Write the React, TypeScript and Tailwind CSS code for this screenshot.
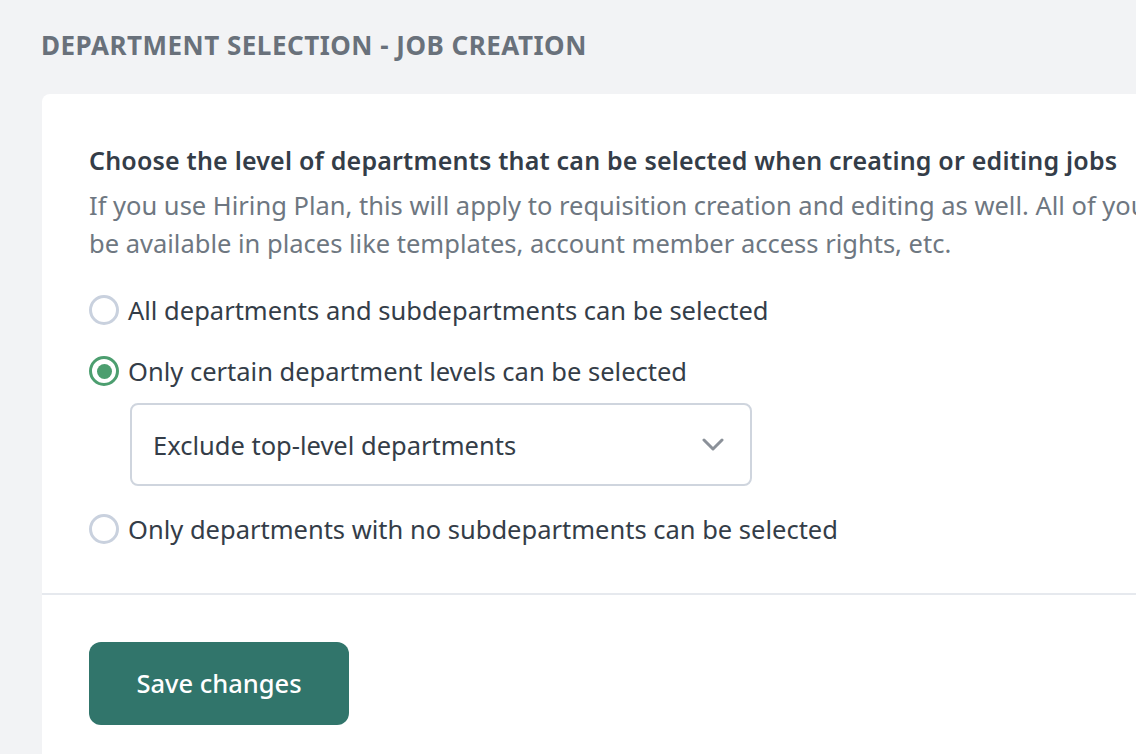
import React from "react";

function Radio({ checked }: { checked?: boolean }) {
  return checked ? (
    <span className="flex h-[30px] w-[30px] shrink-0 items-center justify-center rounded-full border-[3px] border-[#4c9e6f] bg-white">
      <span className="h-[15px] w-[15px] rounded-full bg-[#4c9e6f]" />
    </span>
  ) : (
    <span className="h-[30px] w-[30px] shrink-0 rounded-full border-[3px] border-[#c9d1de] bg-white" />
  );
}

export default function App() {
  return (
    <div
      className="min-h-[754px] w-full overflow-hidden bg-[#f2f3f5]"
      style={{ fontFamily: '"Noto Sans", "Open Sans", sans-serif' }}
    >
      <div className="pl-[41px] pt-[28px] text-[26px] font-bold leading-[34px] tracking-[0.5px] text-[#69717b]">
        DEPARTMENT SELECTION - JOB CREATION
      </div>
      <div className="ml-[42px] mt-[32px] w-[1120px] rounded-[8px] bg-white">
        <div className="px-[47px] pb-[47px] pt-[49px]">
          <div className="whitespace-nowrap text-[25px] font-semibold leading-[34px] tracking-[0.2px] text-[#343d48]">
            Choose the level of departments that can be selected when creating or editing jobs
          </div>
          <div className="mt-[9px] whitespace-nowrap text-[25.5px] leading-[38px] text-[#6e7781]">
            <div>If you use Hiring Plan, this will apply to requisition creation and editing as well. All of your departments will still</div>
            <div>be available in places like templates, account member access rights, etc.</div>
          </div>
          <div className="mt-[31px] flex flex-col text-[25.5px] leading-[34px] text-[#343d48]">
            <label className="flex items-center gap-[9px]">
              <Radio />
              <span>All departments and subdepartments can be selected</span>
            </label>
            <label className="mt-[27px] flex items-center gap-[9px]">
              <Radio checked />
              <span>Only certain department levels can be selected</span>
            </label>
            <div className="ml-[41px] mt-[15px] flex h-[83px] w-[622px] items-center justify-between rounded-[8px] border-2 border-[#cfd5de] pl-[21px] pr-[26px] text-[25.5px]">
              <span>Exclude top-level departments</span>
              <svg width="22" height="14" viewBox="0 0 22 14" fill="none">
                <path d="M2 2l9 9 9-9" stroke="#8b9199" strokeWidth="3" strokeLinecap="round" strokeLinejoin="round" />
              </svg>
            </div>
            <label className="mt-[26px] flex items-center gap-[9px]">
              <Radio />
              <span>Only departments with no subdepartments can be selected</span>
            </label>
          </div>
        </div>
        <div className="h-[2px] bg-[#e6e9ee]" />
        <div className="px-[47px] pb-[40px] pt-[47px]">
          <button className="flex h-[83px] w-[260px] items-center justify-center rounded-[12px] bg-[#31756b] text-[25.5px] font-medium text-white">
            Save changes
          </button>
        </div>
      </div>
    </div>
  );
}
